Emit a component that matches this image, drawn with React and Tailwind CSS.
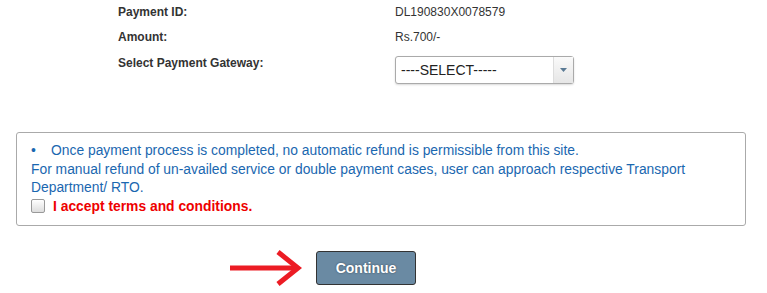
export default function App() {
  return (
    <div className="w-[767px] h-[293px] bg-white font-['Liberation_Sans',Arial,sans-serif] overflow-hidden">
      <div className="pl-[118px] text-[12px] text-[#333]">
        <div className="flex h-[24px] items-center">
          <div className="w-[277px] font-bold">Payment ID:</div>
          <div>DL190830X0078579</div>
        </div>
        <div className="flex h-[25px] items-center">
          <div className="w-[277px] font-bold">Amount:</div>
          <div>Rs.700/-</div>
        </div>
        <div className="flex items-start">
          <div className="w-[277px] pt-[5px] font-bold">Select Payment Gateway:</div>
          <div className="mt-[7px] flex h-[28px] w-[179px] items-stretch rounded-[3px] border border-[#aaa] bg-white shadow-[0_1px_2px_rgba(0,0,0,0.15)]">
            <div className="flex flex-1 items-center pl-[5px] text-[14px] text-[#222]">----SELECT-----</div>
            <div className="flex w-[20px] items-center justify-center border-l border-[#ddd] bg-gradient-to-b from-[#fafafa] to-[#e6e6e6]">
              <svg width="7" height="4" viewBox="0 0 7 4">
                <path d="M0 0h7L3.5 4z" fill="#5a7a94" />
              </svg>
            </div>
          </div>
        </div>
      </div>

      <div className="ml-[16px] mt-[48px] h-[94px] w-[730px] rounded-[3px] border border-[#aaa] pl-[14px] pt-[8px] text-[13.85px] leading-[18.5px] text-[#1a67b0]">
        <div className="flex">
          <span className="w-[20px]">•</span>
          <span>Once payment process is completed, no automatic refund is permissible from this site.</span>
        </div>
        <div>
          For manual refund of un-availed service or double payment cases, user can approach respective Transport
          <br />
          Department/ RTO.
        </div>
        <label className="flex items-center gap-[8px]">
          <span className="h-[14px] w-[14px] rounded-[2px] border border-[#999] bg-gradient-to-b from-[#fff] to-[#ddd]" />
          <span className="font-bold text-[#ee0000]">I accept terms and conditions.</span>
        </label>
      </div>

      <div className="mt-[24px] flex items-center">
        <svg className="ml-[230px]" width="72" height="36" viewBox="0 0 72 36">
          <path d="M0 18H68" stroke="#ec1c24" strokeWidth="5" />
          <path d="M48 2L68 18L48 34" stroke="#ec1c24" strokeWidth="5" fill="none" />
        </svg>
        <button className="ml-[14px] h-[34px] w-[100px] rounded-[3px] border border-[#333] bg-[#6a8aa3] text-[14px] font-bold text-white [text-shadow:0_0_2px_rgba(0,0,0,0.5)]">
          Continue
        </button>
      </div>
    </div>
  )
}
